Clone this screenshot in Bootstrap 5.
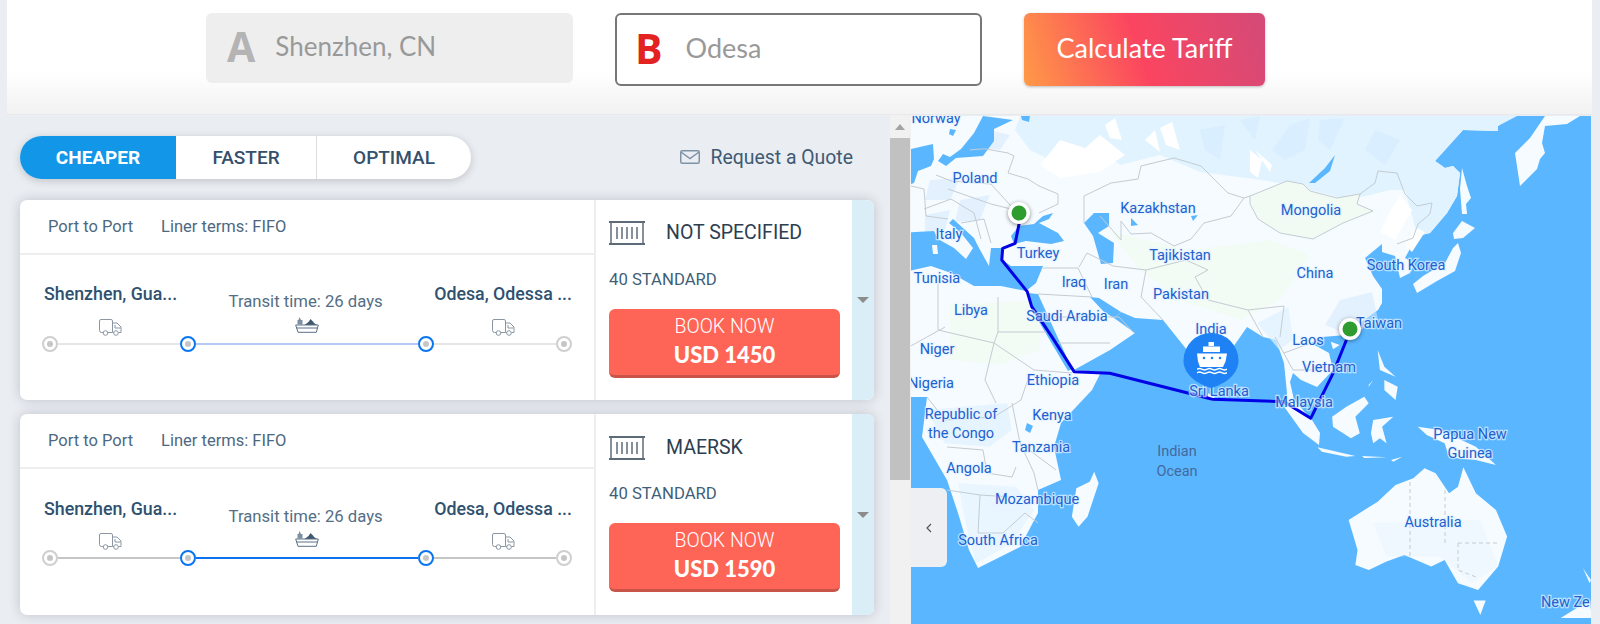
<!DOCTYPE html>
<html lang="en">
<head>
<meta charset="utf-8">
<title>Calculate Tariff</title>
<link href="https://cdn.jsdelivr.net/npm/bootstrap@5.3.0/dist/css/bootstrap.min.css" rel="stylesheet">
<style>
html,body{height:624px;overflow:hidden}
body{background:#eaedf2;font-family:Roboto,"Liberation Sans",sans-serif;color:#3c5a75}
.shell{padding:0 8px 0 7px;height:624px}
.topbar{height:115px;background:linear-gradient(#fff 0,#fff 62%,#f2f2f3 100%);padding:13px 0 0 199px;gap:42px;border-bottom:1px solid #e8e9ec}
.pointbox{width:367px;height:70px;border-radius:6px;background:#eee;padding:0 0 3px 21px;gap:20px;font-family:Lato,sans-serif;font-size:26px;color:#999}
.pointbox.active{background:#fff;border:2px solid #777;height:73px;padding-left:18px;gap:23px;font-size:27px}
.pointletter{font-family:"Open Sans",sans-serif;font-weight:700;font-size:41px;line-height:1;color:#b4b4b4}
.active .pointletter{color:#e32222}
.calcbtn{width:241px;height:73px;border:0;border-radius:6px;padding:0 0 3px;background:linear-gradient(72deg,#ff9a47 0,#fb4560 48%,#d34a78 100%);color:#fff;font-family:Lato,sans-serif;font-size:27px;box-shadow:0 1px 3px rgba(0,0,0,.25)}
.calcbtn:hover{color:#fff}
.mainrow{height:509px}
.listpane{width:883px;padding:21px 16px 0 13px;overflow:hidden}
.tabhead{margin-bottom:21px}
.tabset{width:451px;height:43px;border-radius:22px;background:#fff;box-shadow:0 2px 9px rgba(0,0,0,.18);overflow:hidden}
.tabitem{height:43px;line-height:43px;text-align:center;font-size:19px;font-weight:500;color:#34506b;border-right:1px solid #ddd}
.tabitem.t1{width:156px;background:#1296e8;color:#fff;font-weight:700;border:0}
.tabitem.t2{width:141px}
.tabitem.t3{flex:1;border:0}
.quote{font-size:19.400px;color:#3f5a73;gap:11px;padding-right:21px}
.offer{height:200px;border-radius:7px;background:#fff;box-shadow:0 0 12px rgba(40,50,70,.22);overflow:hidden}
.offer+.offer{height:201px;margin-top:14px}
.routeside{width:574px}
.terms{height:55px;border-bottom:2px solid #eee;padding:2px 0 0 28px;gap:28px;font-size:16.500px;color:#4d6880}
.labels{margin:29px 22px 0 24px;font-size:17.800px;line-height:20px;font-weight:500;color:#2f5170}
.second .labels{margin-top:30px}
.second .iconrow{margin-top:4px}
.labels span{white-space:nowrap}
.labels .mid{margin-top:8px;font-size:16.700px;font-weight:400;color:#546e85}
.iconrow{margin:5px 0 0 79px;width:416px;height:19px}
.iconrow .truck{margin-top:2px}
.track{margin-left:22px;width:530px}
.stop{width:16px;height:16px;border-radius:50%;border:2px solid #cfcfcf;background:#fff;flex:none}
.stop::after{content:"";display:block;width:6px;height:6px;margin:3px;border-radius:50%;background:#c6c6c6}
.stop.port{border-color:#0a75f0}
.seg{height:2px;flex:1;background:#e6e6e6}
.seg.sea{flex:none;width:222px;background:#b6c9f3}
.second .seg{background:#c6c6c6}
.second .seg.sea{background:#0f73ee}
.offerside{width:258px;border-left:2px solid #eee;padding:21px 12px 0 13px}
.carrier{height:24px;gap:21px;font-size:19.500px;color:#2c3e50}
.second .carrier{margin-top:1px}
.ctype{margin-top:25px;font-size:16.700px;line-height:20px;color:#3f5f7a}
.second .ctype{margin-top:24px}
.bookbtn{display:block;width:231px;height:69px;margin-top:19px;padding:2px 0 0;border:0;border-bottom:3px solid #c9544a;border-radius:6px;background:#ff6556;color:#fff;font-size:19.500px;font-weight:300;line-height:24px}
.bookbtn:hover{background:#ff6556;color:#fff}
.bookbtn b{display:block;font-family:Lato,sans-serif;font-size:22px;font-weight:900;line-height:32px}
.expander{width:22px;background:#daeef8}
.expander i{display:block;border:6px solid transparent;border-top:6px solid #8c8c8c;border-bottom:0}
.scrolltrack{width:21px;background:#f1f1f1;padding-right:1px}
.scrollup{height:23px}
.scrollup i{display:block;border:5px solid transparent;border-bottom:6px solid #a3a3a3;border-top:0}
.scrollthumb{height:342px;background:#c1c1c1}
.mappane{width:680px;height:508px;background:#5ab7ff;overflow:hidden;margin-top:1px}
.mappane svg{display:block}
.mapl text{font-family:Roboto,sans-serif;font-size:14.500px;fill:#2160cf;stroke:rgba(228,243,255,.7);stroke-width:2.500px;paint-order:stroke;text-anchor:middle}
.mapl text.ocean{fill:#44699c;stroke:none}
.collapse-tab{position:absolute;left:0;top:372px;width:36px;height:79px;background:#eeeff2;border-radius:0 6px 6px 0}
.bd{fill:none;stroke:#c3ccd2;stroke-width:1;vector-effect:non-scaling-stroke}
</style>
</head>
<body>
<div class="shell d-flex flex-column">
  <header class="topbar d-flex align-items-start">
    <div class="pointbox d-flex align-items-center"><span class="pointletter">A</span><span>Shenzhen, CN</span></div>
    <div class="pointbox active d-flex align-items-center"><span class="pointletter">B</span><span>Odesa</span></div>
    <button class="btn calcbtn" type="button">Calculate Tariff</button>
  </header>
  <div class="mainrow d-flex">
    <div class="listpane">
      <div class="tabhead d-flex justify-content-between align-items-center">
        <div class="tabset d-flex">
          <div class="tabitem t1">CHEAPER</div>
          <div class="tabitem t2">FASTER</div>
          <div class="tabitem t3">OPTIMAL</div>
        </div>
        <div class="quote d-flex align-items-center">
          <svg width="20" height="14" viewBox="0 0 20 14"><rect x=".75" y=".75" width="18.500" height="12.500" rx="1.500" fill="none" stroke="#7f93a6" stroke-width="1.500"/><path d="M1 2l9 6.500L19 2" fill="none" stroke="#7f93a6" stroke-width="1.500"/></svg>
          <span>Request a Quote</span>
        </div>
      </div>

      <article class="offer d-flex">
        <div class="routeside">
          <div class="terms d-flex align-items-center"><span>Port to Port</span><span>Liner terms: FIFO</span></div>
          <div class="labels d-flex justify-content-between"><span>Shenzhen, Gua...</span><span class="mid">Transit time: 26 days</span><span>Odesa, Odessa ...</span></div>
          <div class="iconrow d-flex justify-content-between align-items-start">
            <svg class="truck" width="23" height="17" viewBox="0 0 23 17" fill="none" stroke="#8a97a3"><path d="M4 13.500H2.500a2 2 0 0 1-2-2V2a1.500 1.500 0 0 1 1.500-1.500h10a1.500 1.500 0 0 1 1.500 1.500v11.500H9"/><path d="M14 4h4l4 4v5.500h-2.500M14 13.500h1M16 6v3h5.500"/><circle cx="6.500" cy="14" r="2.300"/><circle cx="17" cy="14" r="2.300"/></svg>
            <svg width="24" height="16" viewBox="0 0 24 16"><path d="M4.500 0l1.500 3h1.500v4.500h-5V3h1z" fill="#7d8fa0"/><path d="M9.500 8l4-3 2-3 2.500 2.500 1 1.500 3 2z" fill="#405870"/><path d="M.7 8h22.600l-2 7.300H3z" fill="#fff" stroke="#5a7086"/><path d="M1.500 11h21" stroke="#5a7086"/></svg>
            <svg class="truck" width="23" height="17" viewBox="0 0 23 17" fill="none" stroke="#8a97a3"><path d="M4 13.500H2.500a2 2 0 0 1-2-2V2a1.500 1.500 0 0 1 1.500-1.500h10a1.500 1.500 0 0 1 1.500 1.500v11.500H9"/><path d="M14 4h4l4 4v5.500h-2.500M14 13.500h1M16 6v3h5.500"/><circle cx="6.500" cy="14" r="2.300"/><circle cx="17" cy="14" r="2.300"/></svg>
          </div>
          <div class="track d-flex align-items-center"><span class="stop"></span><span class="seg"></span><span class="stop port"></span><span class="seg sea"></span><span class="stop port"></span><span class="seg"></span><span class="stop"></span></div>
        </div>
        <div class="offerside flex-grow-1">
          <div class="carrier d-flex align-items-center">
            <svg width="36" height="24" viewBox="0 0 36 24" fill="none" stroke="#5d6b78" stroke-width="1.500"><path d="M0 1h36M0 23h36" stroke-width="2"/><path d="M2 1v22M34 1v22M8 6v12M13 6v12M18 6v12M23 6v12M28 6v12"/></svg>
            <span>NOT SPECIFIED</span>
          </div>
          <div class="ctype">40 STANDARD</div>
          <button class="btn bookbtn" type="button">BOOK NOW<b>USD 1450</b></button>
        </div>
        <div class="expander d-flex align-items-center justify-content-center"><i></i></div>
      </article>

      <article class="offer second d-flex">
        <div class="routeside">
          <div class="terms d-flex align-items-center"><span>Port to Port</span><span>Liner terms: FIFO</span></div>
          <div class="labels d-flex justify-content-between"><span>Shenzhen, Gua...</span><span class="mid">Transit time: 26 days</span><span>Odesa, Odessa ...</span></div>
          <div class="iconrow d-flex justify-content-between align-items-start">
            <svg class="truck" width="23" height="17" viewBox="0 0 23 17" fill="none" stroke="#8a97a3"><path d="M4 13.500H2.500a2 2 0 0 1-2-2V2a1.500 1.500 0 0 1 1.500-1.500h10a1.500 1.500 0 0 1 1.500 1.500v11.500H9"/><path d="M14 4h4l4 4v5.500h-2.500M14 13.500h1M16 6v3h5.500"/><circle cx="6.500" cy="14" r="2.300"/><circle cx="17" cy="14" r="2.300"/></svg>
            <svg width="24" height="16" viewBox="0 0 24 16"><path d="M4.500 0l1.500 3h1.500v4.500h-5V3h1z" fill="#7d8fa0"/><path d="M9.500 8l4-3 2-3 2.500 2.500 1 1.500 3 2z" fill="#405870"/><path d="M.7 8h22.600l-2 7.300H3z" fill="#fff" stroke="#5a7086"/><path d="M1.500 11h21" stroke="#5a7086"/></svg>
            <svg class="truck" width="23" height="17" viewBox="0 0 23 17" fill="none" stroke="#8a97a3"><path d="M4 13.500H2.500a2 2 0 0 1-2-2V2a1.500 1.500 0 0 1 1.500-1.500h10a1.500 1.500 0 0 1 1.500 1.500v11.500H9"/><path d="M14 4h4l4 4v5.500h-2.500M14 13.500h1M16 6v3h5.500"/><circle cx="6.500" cy="14" r="2.300"/><circle cx="17" cy="14" r="2.300"/></svg>
          </div>
          <div class="track d-flex align-items-center"><span class="stop"></span><span class="seg"></span><span class="stop port"></span><span class="seg sea"></span><span class="stop port"></span><span class="seg"></span><span class="stop"></span></div>
        </div>
        <div class="offerside flex-grow-1">
          <div class="carrier d-flex align-items-center">
            <svg width="36" height="24" viewBox="0 0 36 24" fill="none" stroke="#5d6b78" stroke-width="1.500"><path d="M0 1h36M0 23h36" stroke-width="2"/><path d="M2 1v22M34 1v22M8 6v12M13 6v12M18 6v12M23 6v12M28 6v12"/></svg>
            <span>MAERSK</span>
          </div>
          <div class="ctype">40 STANDARD</div>
          <button class="btn bookbtn" type="button">BOOK NOW<b>USD 1590</b></button>
        </div>
        <div class="expander d-flex align-items-center justify-content-center"><i></i></div>
      </article>
    </div>

    <div class="scrolltrack flex-shrink-0">
      <div class="scrollup d-flex align-items-center justify-content-center"><i></i></div>
      <div class="scrollthumb"></div>
    </div>

    <div class="mappane position-relative flex-shrink-0">
      <svg width="680" height="508" viewBox="911 116 680 508" role="img" aria-label="Route map">
        <g fill="#f6fbff">
          <path d="M900 110H1517L1498 126 1498 131 1463 130 1435 161 1445 168 1453 166 1460 173 1457 196 1447 213 1430 233 1417 236 1405 258 1414 263 1410 273 1400 278 1395 256 1382 252 1382 244 1365 258 1373 276 1382 289 1382 303 1378 310 1364 320 1346 335 1322 337 1311 343 1329 353 1333 370 1317 387 1301 380 1293 373 1290 382 1294 400 1312 420 1320 433 1319 445 1303 433 1285 408 1287 393 1284 363 1276 340 1263 337 1247 327 1238 340 1222 363 1212 380 1204 370 1187 350 1163 320 1135 318 1121 312 1114 318 1135 333 1110 350 1074 370 1101 372 1092 390 1061 423 1054 447 1061 480 1038 490 1038 513 1020 547 978 568 969 550 958 513 947 480 922 437 927 397 911 397 900 397Z"/>
          <path d="M1580 116 1567 124 1545 126 1542 143 1545 153 1540 159 1537 169 1520 186 1515 153 1530 138 1545 116Z"/>
          <path d="M1462 168 1467 186 1471 198 1466 204 1467 214 1462 214 1460 189Z"/>
          <path d="M1462 221 1475 228 1463 238 1454 239 1453 233Z"/>
          <path d="M1458 243 1461 253 1455 271 1437 281 1417 293 1413 284 1423 276 1445 263 1453 248Z"/>
        </g>
        <path fill="#e1f3ff" d="M1020 116H1517L1498 126 1498 131 1463 130 1435 161 1445 168 1453 166 1460 173 1457 196 1447 213 1430 233 1417 236 1412 215 1405 190 1390 190 1370 195 1345 200 1330 195 1290 185 1262 180 1200 172 1160 155 1120 165 1100 150 1060 165 1030 150 1015 130Z"/>
        <g fill="#fff">
          <path d="M1040 165 1060 140 1085 148 1100 135 1125 155 1100 172 1060 178Z"/>
          <path d="M1160 128 1172 122 1180 150 1166 145ZM1105 125 1115 118 1122 140 1110 138ZM1145 140 1155 130 1160 152ZM1250 150 1262 160 1258 178 1250 172ZM1255 150 1272 165 1270 172Z"/>
          <path d="M1400 195 1412 210 1395 240 1380 232 1388 215Z"/>
          <path d="M1405 245 1417 228 1425 232 1412 252Z"/>
        </g>
        <g fill="#d3eaff" opacity=".55">
          <path d="M1290 125 1310 118 1305 150 1285 160 1272 150ZM1320 120 1345 118 1330 150 1318 140ZM1200 130 1225 125 1220 160 1205 150ZM1375 130 1400 140 1385 165 1365 150ZM1240 120 1260 116 1255 140Z"/>
          <path d="M930 180 960 178 950 200 925 200ZM960 200 990 195 980 220 955 222ZM990 130 1010 135 1000 150 985 148ZM925 215 950 210 945 230 925 232Z"/>
          <path d="M1340 300 1372 292 1378 320 1350 335 1325 325Z"/>
        </g>
        <path fill="#f2faf4" d="M1360 194 1357 204 1373 211 1343 223 1313 239 1280 233 1258 219 1250 204 1250 196 1287 181 1303 184 1310 191 1337 198Z"/>
        <path fill="#f3fbf5" d="M1110 232 1190 250 1270 240 1310 255 1280 300 1240 320 1180 300 1140 270ZM950 305 1040 300 1040 350 1000 365 950 360Z"/>
        <g transform="translate(900 110) scale(.4464 .3333)">
          <g fill="#f6fbff">
            <path d="M965 695 985 705 970 718Z"/>
            <path d="M1070 720 1085 770 1110 800 1075 780Z"/>
            <path d="M1085 810 1115 830 1110 870 1085 840ZM1050 825 1060 810 1050 830Z"/>
            <path d="M435 1085 445 1120 420 1220 400 1250 385 1220 395 1135 425 1115Z"/>
            <path d="M1040 860 1050 880 1020 920 1030 970 1010 985 970 950 968 920 1000 890Z"/>
            <path d="M1060 930 1105 920 1080 950 1090 1000 1075 985 1060 1000 1055 970Z"/>
            <path d="M935 1012 1020 1038 1000 1040 945 1025ZM1035 1038 1090 1042 1040 1044ZM1100 1050 1125 1040 1105 1055Z"/>
            <path d="M1160 950 1210 960 1290 1010 1335 1065 1290 1050 1230 1042 1220 1000 1180 975Z"/>
            <path d="M1175 1075 1200 1090 1230 1150 1250 1130 1262 1072 1290 1150 1335 1200 1360 1280 1340 1370 1295 1440 1250 1420 1220 1350 1190 1370 1130 1335 1090 1355 1050 1380 1020 1365 1025 1320 1005 1230 1070 1175 1110 1125 1150 1105Z"/>
            <path d="M1285 1472 1312 1472 1300 1515Z"/>
            <path d="M1530 1375 1548 1410 1545 1420ZM1480 1524 1545 1470 1550 1524Z"/>
            <path d="M690 850 705 860 700 872 690 868Z"/>
          </g>
          <g fill="#dff1ff">
            <path d="M60 900 240 880 250 960 200 1010 100 1000Z" opacity=".75"/>
            <path d="M130 1120 260 1130 300 1200 250 1300 170 1360 150 1260Z" opacity=".55"/>
            <path d="M800 640 870 590 880 690 850 720Z" opacity=".7"/>
            <path d="M1060 1240 1300 1230 1340 1370 1280 1420 1210 1340 1090 1340Z" opacity=".25"/>
          </g>
        </g>
        <g fill="#5ab7ff">
          <path d="M983 116 1013 120 994 129 994 141 983 156 956 158 946 166 938 161 943 154 950 157 961 149 974 133Z"/>
          <path d="M1021 116 1030 116 1029 122 1022 120Z"/>
          <path d="M950 129 956 130 953 136 949 134Z"/>
          <path d="M911 149 924 146 933 144 934 159 931 166 918 171 914 183 911 184Z"/>
          <path d="M900 233 934 231 938 239 954 248 966 259 973 248 961 233 949 223 953 219 974 238 979 248 989 266 991 248 1003 248 1001 259 1011 266 1043 266 1036 283 1026 291 1001 286 974 286 951 273 931 266 900 273Z"/>
          <path d="M1019 226 1034 224 1043 216 1053 213 1049 219 1039 223 1058 233 1064 241 1051 244 1026 241 1014 244 1011 236Z"/>
          <path d="M1084 223 1094 213 1109 213 1109 226 1098 233 1114 243 1113 263 1101 264 1093 236Z"/>
          <path d="M1131 218 1138 225 1131 226Z"/>
          <path d="M1191 216 1213 213 1198 215 1193 221Z"/>
          <path d="M1335 155 1330 171 1315 183 1309 183 1325 168Z"/>
          <path d="M1090 297 1099 298 1121 312 1114 318 1104 312Z"/>
          <path d="M1027 293 1038 294 1072 369 1068 371 1032 310Z"/>
          <path d="M1027 423 1033 426 1030 433 1025 430Z"/>
        </g>
        <path fill="#f6fbff" d="M932 245 937 245 938 254 933 254Z"/>
        <g class="bd">
          <path class="bd" d="M981 149 986 149 1008 153 1014 156 1008 173 1028 179 1039 186 1058 194 1058 204 1039 213"/>
          <path class="bd" d="M951 181 991 184 1011 206M948 189 991 204 1011 209M924 209 951 199 974 213 981 239M911 186 924 189 926 216 948 219M961 223 984 219 991 243M936 175 951 181M970 150 981 149"/>
          <path class="bd" d="M1084 196 1111 183 1138 179 1141 166 1174 158 1201 166 1228 193 1244 198 1231 216 1204 223 1191 239 1174 246 1151 233 1131 234 1121 221 1121 240 1100 216M1084 196 1084 223"/>
          <path class="bd" d="M1244 198 1250 196 1287 181 1303 184 1310 191 1337 198 1360 194 1375 183 1378 171 1397 173 1405 194 1417 206 1432 203 1430 214 1418 224 1413 238 1397 244"/>
          <path class="bd" d="M1360 194 1357 204 1373 211 1343 223 1313 239 1280 233 1258 219 1250 204 1250 196"/>
          <path class="bd" d="M1043 268 1078 268 1092 297M1038 294 1092 297M1047 317 1119 317 1134 333M1054 343 1110 343"/>
          <path class="bd" d="M1079 267 1087 253 1113 266 1146 270 1141 297 1163 320M1146 270 1186 260 1208 270 1195 277 1208 300 1248 310 1284 306 1280 337M1248 310 1263 337"/>
          <path class="bd" d="M938 283 938 330 994 343 998 332 1047 332M998 297 998 332M945 327 909 347M994 343 985 380 996 403M994 343 1034 370 1072 373M927 397 945 420 994 417 1021 400 1030 373"/>
          <path class="bd" d="M1012 403 1020 443 1056 470M1020 443 1034 473 1038 490M947 447 983 450 987 473 1012 477 1016 467M947 490 980 495 1012 497M980 495 978 533 1003 533 1025 513 1038 523"/>
          <path class="bd" d="M1284 353 1311 343M1275 337 1293 370M1293 370 1320 370"/>
          <path class="bd" stroke-dasharray="4 3" d="M1410 482V557M1445 490V543M1458 543H1500M1458 543V570L1476 577"/>
        </g>
        <path transform="translate(900 110) scale(.4464 .3333)" d="M267 340 258 400 230 415 228 450 285 545 295 590 340 680 390 785 470 790 700 868 860 875 920 925 970 790 1000 690" fill="none" stroke="#0202e6" stroke-width="3" stroke-linejoin="round" vector-effect="non-scaling-stroke"/>
        <g class="mapl">
          <text x="936" y="123">Norway</text><text x="975" y="183">Poland</text><text x="1158" y="213">Kazakhstan</text><text x="1311" y="215">Mongolia</text>
          <text x="949" y="239">Italy</text><text x="1038" y="258">Turkey</text><text x="1180" y="260">Tajikistan</text><text x="1406" y="270">South Korea</text>
          <text x="1315" y="278">China</text><text x="937" y="283">Tunisia</text><text x="1074" y="287">Iraq</text><text x="1116" y="289">Iran</text>
          <text x="1181" y="299">Pakistan</text><text x="971" y="315">Libya</text><text x="1067" y="321">Saudi Arabia</text><text x="1211" y="334">India</text>
          <text x="1379" y="328">Taiwan</text><text x="1308" y="345">Laos</text><text x="937" y="354">Niger</text><text x="1329" y="372">Vietnam</text>
          <text x="1053" y="385">Ethiopia</text><text x="931" y="388">Nigeria</text><text x="1219" y="396">Sri Lanka</text><text x="1304" y="407">Malaysia</text>
          <text x="961" y="419">Republic of</text><text x="961" y="438">the Congo</text><text x="1052" y="420">Kenya</text><text x="1041" y="452">Tanzania</text>
          <text x="969" y="473">Angola</text><text x="1037" y="504">Mozambique</text><text x="998" y="545">South Africa</text>
          <text class="ocean" x="1177" y="456">Indian</text><text class="ocean" x="1177" y="476">Ocean</text>
          <text x="1470" y="439">Papua New</text><text x="1470" y="458">Guinea</text><text x="1433" y="527">Australia</text>
          <text x="1541" y="607" style="text-anchor:start">New Ze</text>
        </g>
        <g fill="#fff" style="filter:drop-shadow(0 1px 2px rgba(0,0,0,.45))"><circle cx="1019" cy="213" r="11"/><circle cx="1350" cy="329" r="11"/></g>
        <circle cx="1019" cy="213" r="7.500" fill="#2f9c2f"/><circle cx="1350" cy="329" r="7.500" fill="#2f9c2f"/>
        <path d="M1211 333a27.500 27.500 0 0 1 27.500 27.500c0 15-15 24-27.500 27.500-12.500-3.500-27.500-12.500-27.500-27.500A27.500 27.500 0 0 1 1211 333Z" fill="#1e82f5"/>
        <g fill="#fff">
          <path d="M1208.500 342h5.500v4h-5.500zM1203 346.500h17v5.500h-17z"/>
          <path d="M1197 353.500h30l-1.500 8-2.500 5.500h-23l-2-5.500z"/>
          <path d="M1197 368.500q2.500-1.500 5 0t5 0 5 0 5 0 5 0 5 0v1.500q-2.500 1.500-5 0t-5 0-5 0-5 0-5 0-5 0zM1197 372q2.500-1.500 5 0t5 0 5 0 5 0 5 0 5 0v1.500q-2.500 1.500-5 0t-5 0-5 0-5 0-5 0-5 0z"/>
        </g>
        <g fill="#1e82f5"><circle cx="1204" cy="358" r="1.300"/><circle cx="1212" cy="358" r="1.300"/><circle cx="1220" cy="358" r="1.300"/></g>
      </svg>
      <div class="collapse-tab d-flex align-items-center justify-content-center">
        <svg width="8" height="10" viewBox="0 0 8 10"><path d="M6 1 2 5l4 4" fill="none" stroke="#555" stroke-width="1.200"/></svg>
      </div>
    </div>
  </div>
</div>
<script src="https://cdn.jsdelivr.net/npm/bootstrap@5.3.0/dist/js/bootstrap.bundle.min.js"></script>
</body>
</html>
